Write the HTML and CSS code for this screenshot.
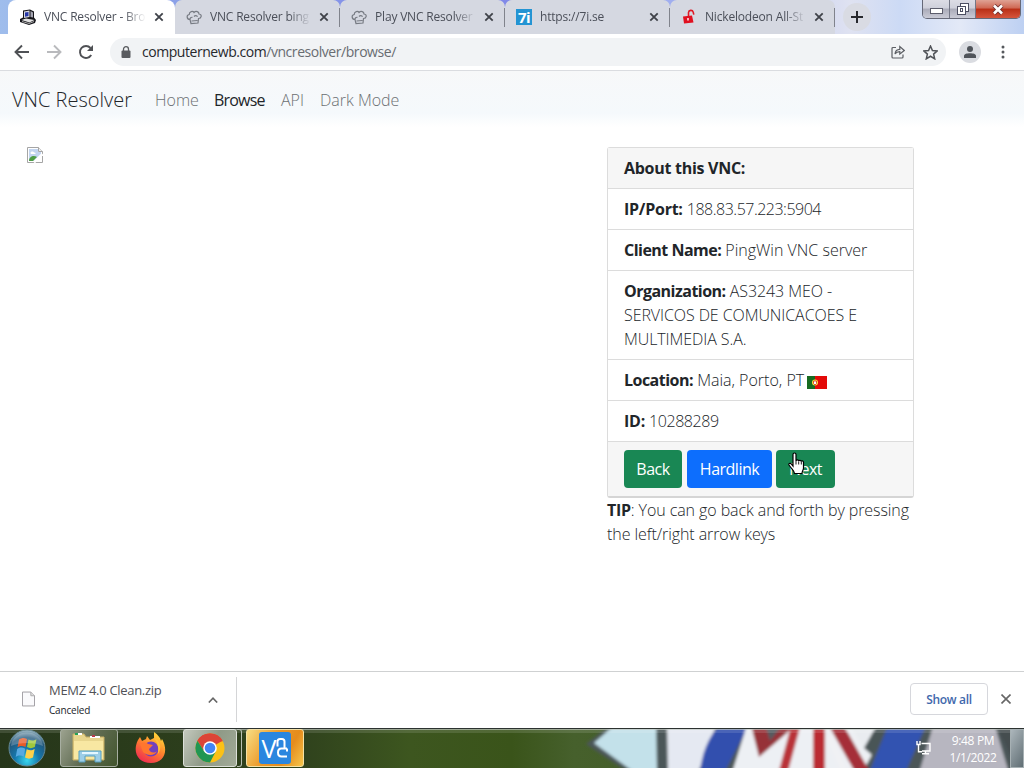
FILE: index.html
```html
<!DOCTYPE html>
<html lang="en">
<head>
  <meta charset="UTF-8">
  <meta name="viewport" content="width=device-width, initial-scale=1.0">
  <title>VNC Resolver - Browse</title>
  <link rel="stylesheet" href="styles.css">
</head>
<body>

  <!-- Tabs -->
  <div class="tabstrip">
    <div class="tab active">
      <svg class="favicon" viewBox="0 0 16 16">
        <path d="M3 1.500l7-1 4 2v6l2 2.500-1 3-6 2-9-3v-3l3-1.500z" fill="#15151a"/>
        <path d="M4 2.500l5.500-1v6.500L4 9z" fill="#d8d8e0"/><path d="M5 3.500l3.500-.5v4L5 7.800z" fill="#2637a8"/>
        <path d="M10.500 2l2.500 1.500v5L10.500 8z" fill="#a5a5b2"/><path d="M1.500 11L6 9.500l8.500 1.500-5 2.500z" fill="#e2e2e2"/>
        <path d="M2 12.500l7 2 5-2" fill="none" stroke="#aaa"/>
      </svg>
      <span class="tab-title">VNC Resolver - Bro</span>
      <svg class="tab-close" viewBox="0 0 10 10"><path d="M1.300 1.300l7.400 7.400M8.700 1.300L1.300 8.700"/></svg>
    </div>
    <div class="tab">
      <svg class="favicon chef" viewBox="0 0 16 16"><path d="M4 10.500C.5 10.500.2 6 3.200 5.500 3.300 2 7 1.800 8 3.500c2-2 5-.8 5 1.500 3.500.5 2.500 4.500-.5 4.500L12 14l-7 .5zM4 10.500c0-1.500 1-2.500 2.500-2.200M8 7.500c1-1.200 3-1 3.500.2M5.500 12l6-.5"/></svg>
      <span class="tab-title">VNC Resolver bing</span>
      <svg class="tab-close" viewBox="0 0 10 10"><path d="M1.300 1.300l7.400 7.400M8.700 1.300L1.300 8.700"/></svg>
    </div>
    <div class="tab">
      <svg class="favicon chef" viewBox="0 0 16 16"><path d="M4 10.500C.5 10.500.2 6 3.200 5.500 3.300 2 7 1.800 8 3.500c2-2 5-.8 5 1.500 3.500.5 2.500 4.500-.5 4.500L12 14l-7 .5zM4 10.500c0-1.500 1-2.500 2.500-2.200M8 7.500c1-1.200 3-1 3.500.2M5.500 12l6-.5"/></svg>
      <span class="tab-title">Play VNC Resolver</span>
      <svg class="tab-close" viewBox="0 0 10 10"><path d="M1.300 1.300l7.400 7.400M8.700 1.300L1.300 8.700"/></svg>
    </div>
    <div class="tab">
      <span class="favicon seven">7i</span>
      <span class="tab-title">https://7i.se</span>
      <svg class="tab-close" viewBox="0 0 10 10"><path d="M1.300 1.300l7.400 7.400M8.700 1.300L1.300 8.700"/></svg>
    </div>
    <div class="tab">
      <svg class="favicon" viewBox="0 0 16 16">
        <path d="M7.500 7V3.500a2.400 2.400 0 014.700-.4l.6 2.500" fill="none" stroke="#e01825" stroke-width="1.600"/>
        <path d="M2 7.500l9-1 1.500 7-9.500 1z" fill="#e01020"/><path d="M7 9v2.500" stroke="#fff" stroke-width="1.400"/>
      </svg>
      <span class="tab-title">Nickelodeon All-St</span>
      <svg class="tab-close" viewBox="0 0 10 10"><path d="M1.300 1.300l7.400 7.400M8.700 1.300L1.300 8.700"/></svg>
    </div>
    <div class="new-tab"><svg width="12" height="12" viewBox="0 0 12 12"><path d="M6 0v12M0 6h12" stroke="#27282d" stroke-width="2"/></svg></div>
    <div class="window-buttons">
      <span class="wbtn min"><svg width="13" height="6" viewBox="0 0 13 6"><rect x=".5" y=".5" width="12" height="5" fill="#fff" stroke="#5c5d6c"/></svg></span>
      <span class="wbtn max"><svg width="12" height="12" viewBox="0 0 12 12"><g fill="#fff" stroke="#4d4f62"><rect x="3.500" y=".5" width="8" height="8"/><rect x=".5" y="3.500" width="8" height="8"/><rect x="3.500" y="5.500" width="2" height="3"/></g></svg></span>
      <span class="wbtn close"><svg width="12" height="11" viewBox="0 0 12 11"><path d="M2 1.500l8 8M10 1.500l-8 8" stroke="#6c3030" stroke-width="4.400"/><path d="M2 1.500l8 8M10 1.500l-8 8" stroke="#fff" stroke-width="2.600"/></svg></span>
    </div>
  </div>

  <!-- Address bar -->
  <div class="toolbar">
    <svg class="nav-icon" viewBox="0 0 16 16"><path d="M15 8H2M8 1.500L1.500 8 8 14.500" stroke="#4f5155"/></svg>
    <svg class="nav-icon" viewBox="0 0 16 16"><path d="M1 8h13M8 1.500L14.500 8 8 14.500" stroke="#b9babd"/></svg>
    <svg class="nav-icon" viewBox="0 0 16 16"><path d="M13.200 11A6 6 0 1112.500 4" stroke="#4f5155"/><path d="M15 1v6H9z" fill="#4f5155"/></svg>
    <div class="omnibox">
      <svg class="lock" viewBox="0 0 10 12"><rect x=".5" y="4.500" width="9" height="7.500" rx="1" fill="#5a5c60"/><path d="M2.500 5V3.200a2.500 2.500 0 015 0V5" fill="none" stroke="#5a5c60" stroke-width="1.300"/></svg>
      <span class="url"><span class="host">computernewb.com</span>/vncresolver/browse/</span>
      <svg class="share" viewBox="0 0 14 14"><path d="M5 2.500H2a1 1 0 00-1 1V12a1 1 0 001 1h9a1 1 0 001-1V9.500M4 9c.3-3 2-4.500 4.800-4.600V1.500L13.300 5.500 8.800 9V6.700C6.500 6.700 5 7.500 4 9z"/></svg>
      <svg class="star" viewBox="0 0 14 14"><path d="M7 1l1.800 4.100 4.400.4-3.300 3 1 4.400L7 10.500l-3.900 2.400 1-4.400-3.300-3 4.400-.4z"/></svg>
    </div>
    <div class="avatar"><svg width="12" height="12" viewBox="0 0 12 12"><circle cx="6" cy="3" r="3"/><path d="M0 12V9.800C0 6.500 12 6.500 12 9.800V12z"/></svg></div>
    <svg class="menu" viewBox="0 0 4 14"><circle cx="2" cy="2" r="1.500"/><circle cx="2" cy="7" r="1.500"/><circle cx="2" cy="12" r="1.500"/></svg>
  </div>

  <!-- Site -->
  <nav class="navbar">
    <a class="brand">VNC Resolver</a>
    <a class="nav-link home">Home</a>
    <a class="nav-link browse">Browse</a>
    <a class="nav-link api">API</a>
    <a class="nav-link">Dark Mode</a>
  </nav>

  <main class="content">
    <div class="screen">
      <svg width="16" height="16" viewBox="0 0 16 16">
        <path d="M.5.5h11l4 4v11H.5z" fill="#fff" stroke="#a5a5a5"/>
        <path d="M2 2h9v3h3v4l-5 5H2z" fill="#c3d5f0"/><path d="M3.500 6c0-2 3-2 3.500-.5 2-.3 2 1.500 1 1.500H4z" fill="#fff"/>
        <path d="M2 14c0-5 5-6 8-4l-4 4z" fill="#4f9e46"/><path d="M15.500 7L7 15.500" stroke="#fff" stroke-width="2.500"/>
        <path d="M11.500.5v4h4" fill="#eee" stroke="#a5a5a5"/>
      </svg>
    </div>
    <div class="info">
      <div class="card">
        <div class="card-header"><b>About this VNC:</b></div>
        <div class="row"><b class="ip">IP/Port:</b> <span class="v-ip">188.83.57.223:5904</span></div>
        <div class="row"><b>Client Name:</b> <span class="v-client">PingWin VNC server</span></div>
        <div class="row"><b>Organization:</b> <span class="v-org">AS3243 MEO -<br>SERVICOS DE COMUNICACOES E<br>MULTIMEDIA S.A.</span></div>
        <div class="row"><b>Location:</b> <span class="v-loc">Maia, Porto, PT</span>
          <svg class="flag" viewBox="0 0 20 13"><path fill="#e30a08" d="M0 0h20v13H0z"/><path fill="#176b20" d="M0 0h8v13H0z"/><circle cx="8" cy="6.500" r="3" fill="#ffe33c"/><path d="M6.500 5h3v2.500L8 9 6.500 7.500z" fill="#fff" stroke="#d32b1c" stroke-width=".8"/></svg>
        </div>
        <div class="row"><b class="id">ID:</b> <span class="v-id">10288289</span></div>
        <div class="card-footer">
          <button class="btn green back">Back</button>
          <button class="btn blue">Hardlink</button>
          <button class="btn green next">Next
            <svg class="pointer" viewBox="0 0 17 23"><path d="M5 14V2.500c0-2 3-2 3 0V9c0-1.500 2.700-1.500 2.700.3 0-1.300 2.600-1.200 2.600.4 0-1.200 2.200-1 2.200.6V16c0 2-1.500 3-1.500 5.500H6.500c0-2.500-2-3.500-5.500-8.500-.8-1.300 1-2.300 2.200-1.200z" fill="#fff" stroke="#000" stroke-width="1.200"/><path d="M8 9v3.500M10.700 9.500v3M13.300 10v2.500" stroke="#000" stroke-width=".9"/></svg>
          </button>
        </div>
      </div>
      <p class="tip"><b>TIP</b>: You can go back and forth by pressing<br>the left/right arrow keys</p>
    </div>
  </main>

  <!-- Downloads -->
  <div class="downloads">
    <div class="download-item">
      <svg class="file" viewBox="0 0 14 16"><path d="M.5.5h9l4 4v11H.5z" fill="#fafafc" stroke="#9a989e"/><path d="M9.500.5v4h4" fill="#ddd" stroke="#aaa"/></svg>
      <div class="file-text"><div class="file-name">MEMZ 4.0 Clean.zip</div><div class="file-state">Canceled</div></div>
      <svg class="caret" viewBox="0 0 10 6"><path d="M.8 5.500L5 1.200l4.200 4.300"/></svg>
    </div>
    <button class="show-all">Show all</button>
    <svg class="bar-close" viewBox="0 0 10 10"><path d="M.5.5l9 9M9.500.5l-9 9"/></svg>
  </div>

  <!-- Windows taskbar -->
  <div class="taskbar">
    <svg class="wallpaper" viewBox="0 0 1024 40" preserveAspectRatio="none">
      <defs>
        <linearGradient id="grass"><stop offset="0" stop-color="#26361a"/><stop offset=".3" stop-color="#30431d"/><stop offset=".4" stop-color="#3d561f"/><stop offset=".5" stop-color="#3a541a"/><stop offset=".56" stop-color="#46602c"/><stop offset="1" stop-color="#3c531b"/></linearGradient>
        <filter id="soft" x="-5%" y="-20%" width="110%" height="140%"><feGaussianBlur stdDeviation="1.500"/></filter>
      </defs>
      <path fill="url(#grass)" d="M0 0h1024v40H0z"/>
      <g filter="url(#soft)">
        <path d="M586 16L613-5h420v50H629z" fill="#4b5659"/>
        <path d="M594 15L617-5h39l1 50h-22z" fill="#c3e1ea"/>
        <path d="M667-5h50l-19 50h-30z" fill="#e5e9f2"/>
        <path d="M721-5h29l-26 50h-24c2-25 12-40 21-50z" fill="#304fae"/>
        <path d="M747-3l-15 48h130l14-26-28-22z" fill="#edf0f4"/>
        <path d="M751-3h45l-37 32z" fill="#963038"/><path d="M765-4l5 17 13-17z" fill="#555b60"/>
        <path d="M796-3L783 45" stroke="#b93139" stroke-width="9"/><path d="M819-3v48" stroke="#bb2932" stroke-width="12"/><path d="M836-3l27 48" stroke="#a52d37" stroke-width="13"/><path d="M829 8l16 37" stroke="#f0f1f4" stroke-width="7"/>
        <path d="M848-5h44l-25 30z" fill="#e9ecf0"/><path d="M892-5h-14l-14 25 8 7z" fill="#4a5557"/>
        <path d="M889-5h38l-22 50h-36z" fill="#3153b1"/>
        <path d="M934-5l-15 50h90l-15-50z" fill="#b7b6c0"/>
        <path d="M995-5l15 32 15 18V-5z" fill="#454d50"/>
      </g>
      <path d="M0 .5h1024" stroke="#2c3230"/><path d="M0 1.500h1024" stroke="#c6ccc6" stroke-opacity=".7"/><path fill="#fff" fill-opacity=".12" d="M0 2h1024v3H0z"/>
    </svg>

    <svg class="start" viewBox="0 0 38 38">
      <defs><radialGradient id="orb" cx=".5" cy=".85" r=".85"><stop offset="0" stop-color="#38d6ee"/><stop offset=".4" stop-color="#1577ac"/><stop offset=".75" stop-color="#22577b"/><stop offset="1" stop-color="#a6bfc9"/></radialGradient></defs>
      <circle cx="19" cy="19" r="18" fill="url(#orb)" stroke="#668994"/>
      <path d="M11 10.500c3-2 5-2 8-.5l-1.500 8c-3-1.500-5-1.500-8 .3z" fill="#e75b29"/><path d="M20.500 10.500c3 1.500 5 1.500 8-.3L26.800 18c-3 1.500-5 1.500-7.800 0z" fill="#9fc83c"/>
      <path d="M9.200 20c3-1.800 5-1.800 8-.3l-1.500 8c-3-1.500-5-1.500-8 .3z" fill="#58a9e1"/><path d="M18.700 20.200c3 1.500 5 1.500 8-.2L25 28.500c-3 1.500-5 1.500-8 0z" fill="#fdd04b"/>
      <path d="M3 17C5-1 33-1 35 17c-9-4-23-4-32 0z" fill="#fff" fill-opacity=".22"/>
    </svg>
    <div class="task explorer"><svg width="34" height="32" viewBox="0 0 34 32"><path d="M1 2h11l2 3h18v23H1z" fill="#e8d58d" stroke="#c6ae64"/><path d="M3 2h7M18 5h10" stroke="#fff" stroke-width="2"/><path d="M3 2h3" stroke="#27a357" stroke-width="2"/><path d="M20 4h3" stroke="#b83a4b" stroke-width="2"/><path d="M2 9h29v18H2z" fill="#f8e7a2"/><path d="M7 30V19h22v11h-6v-6H13v6z" fill="#9dcee7" stroke="#569fbe"/><path d="M10 21h16" stroke="#e4f7ff" stroke-width="2"/></svg></div>
    <div class="task firefox"><svg width="32" height="32" viewBox="0 0 32 32"><defs><linearGradient id="fox" x1=".8" y1="0" x2=".2" y2="1"><stop offset="0" stop-color="#ffe43b"/><stop offset=".45" stop-color="#ff862d"/><stop offset="1" stop-color="#ee2554"/></linearGradient></defs><path d="M3 8l2-3 2 4 4-2 1-3 3 4 4-2V0c4 3 6 5 7 9l1-2c7 12 2 24-11 24C3 31-3 20 3 8z" fill="url(#fox)"/><circle cx="16" cy="17" r="7.500" fill="#7141bd"/><path d="M5 12c4-3 7-1 8 0l5 1-4 4c0 3 5 5 8 2-2 5-10 5-14 1z" fill="#ff762e"/><path d="M19 6c7 3 8 10 4 16 1-8-1-12-4-16z" fill="#ffc13a"/></svg></div>
    <div class="task chrome"><svg width="30" height="30" viewBox="0 0 30 30"><circle cx="15" cy="15" r="14.500" fill="#fbc116"/><path d="M15 15L2.440 7.750A14.500 14.500 0 0127.560 7.750z" fill="#dc4437"/><path d="M15 8.250h12.800A14.500 14.500 0 002.440 7.750L9.200 18.400z" fill="#dc4437"/><path d="M2.440 7.750A14.500 14.500 0 0015 29.500l5.850-11.130L15 15 9.150 18.370z" fill="#219653"/><circle cx="15" cy="15" r="6.800" fill="#fff"/><circle cx="15" cy="15" r="5.300" fill="#4385f4"/></svg></div>
    <div class="chrome-stack"></div>
    <div class="task vnc">
      <span class="vnc-logo">V<svg width="12" height="22" viewBox="0 0 12 22"><path d="M1.500 9.500V4.500Q1.500 2 4 2h2Q8.500 2 8.500 4.500V11M11 11.500H5.500Q2 11.500 2 15.500T5.500 19.500H11M11 11.500v3" fill="none" stroke="#fff" stroke-width="2"/></svg></span>
    </div>

    <svg class="network" viewBox="0 0 15 14"><path d="M5.500 2.500h8.500v7.500H6M9.500 10v2.500M6 12.800h7M1 0v3.500h3V0M2.500 3.500v7.200H6" fill="none" stroke="#fff" stroke-width="1.400"/></svg>
    <div class="clock"><div>9:48 PM</div><div class="date">1/1/2022</div></div>
    <div class="show-desktop"></div>
  </div>

</body>
</html>
```
FILE: styles.css
```css
* {
  box-sizing: border-box;
}
body {
  margin: 0;
  width: 1024px;
  height: 768px;
  overflow: hidden;
  display: flex;
  flex-direction: column;
  background: #fff;
  color: #212529;
  font-family: 'Segoe UI', 'Open Sans', 'Noto Sans', sans-serif;
  font-size: 16px;
  line-height: 24px;
}
svg {
  flex: none;
  display: block;
}

/* tabs */
.tabstrip {
  height: 34px;
  flex: none;
  display: flex;
  padding-left: 8px;
  background: linear-gradient(90deg, #9fbdec 0, #8ba1e8 170px, #8088e8 500px, #a6b5f0 700px, #dfe2f1 850px, #ccdaf5 900px, #e3e9f7 960px, #bdd0f2 1024px);
}
.tab {
  width: 165px;
  height: 34px;
  display: flex;
  align-items: center;
  padding: 0 11px;
  background: #d5d8e1;
  position: relative;
  font-size: 12px;
  color: #4b4f59;
}
.tab + .tab {
  border-radius: 7px 7px 0 0;
}
.tab.active {
  width: 167px;
  padding-left: 12px;
  background: #fff;
  border-radius: 8px 8px 0 0;
}
.tab:not(.active)::after {
  content: "";
  position: absolute;
  right: 0;
  top: 8px;
  width: 1px;
  height: 19px;
  background: #80838c;
}
.favicon {
  width: 16px;
  height: 16px;
  flex: none;
}
.chef {
  fill: none;
  stroke: #777b83;
  stroke-width: 1.2;
}
.seven {
  background: #2394d3;
  color: #fff;
  font-size: 15px;
  font-weight: 700;
  line-height: 16px;
  text-align: center;
  letter-spacing: -0.5px;
}
.tab-title {
  width: 102px;
  margin: 0 8px;
  overflow: hidden;
  white-space: nowrap;
  letter-spacing: -0.18px;
  -webkit-mask-image: linear-gradient(90deg, #000 78%, transparent 100%);
  mask-image: linear-gradient(90deg, #000 78%, transparent 100%);
}
.tab-close {
  width: 10px;
  height: 10px;
  margin-left: auto;
  stroke: #3f4249;
  stroke-width: 1.8;
}
.new-tab {
  width: 28px;
  height: 28px;
  margin: 3px 0 0 8px;
  border-radius: 50%;
  display: flex;
  align-items: center;
  justify-content: center;
  background: #d9dbe3;
}
.window-buttons {
  margin-left: auto;
  margin-right: 3px;
  height: 19px;
  display: flex;
  border: 1px solid #666978;
  border-top: 0;
  border-radius: 0 0 5px 5px;
  overflow: hidden;
}
.wbtn {
  width: 27px;
  display: flex;
  align-items: center;
  justify-content: center;
  background: linear-gradient(#dcdce5 0, #cfd0db 45%, #aaabb9 50%, #cacbd6 100%);
  border-right: 1px solid #747786;
}
.wbtn.min {
  padding-top: 3px;
}
.wbtn.max {
  width: 26px;
}
.wbtn.close {
  width: 44px;
  border: 0;
  background: linear-gradient(#dfa294 0, #cf6853 45%, #b92f16 50%, #d6553c 100%);
}

/* address bar */
.toolbar {
  height: 37px;
  flex: none;
  display: flex;
  align-items: center;
  padding: 0 19px 0 14px;
  border-bottom: 1px solid #dadce0;
  background: #fff;
}
.nav-icon {
  width: 16px;
  height: 16px;
  margin-right: 16px;
  fill: none;
  stroke-width: 1.9;
}
.omnibox {
  width: 836px;
  height: 28px;
  border-radius: 14px;
  background: #f1f3f5;
  display: flex;
  align-items: center;
  padding: 0 8px 0 11px;
}
.lock {
  width: 10px;
  height: 12px;
  margin-right: 11px;
}
.url {
  font-size: 14px;
  color: #686c71;
  letter-spacing: -0.45px;
}
.host {
  color: #26282c;
}
.share {
  width: 14px;
  height: 14px;
  margin-left: auto;
  margin-right: 18px;
  fill: none;
  stroke: #5c5f64;
  stroke-width: 1.2;
}
.star {
  width: 15px;
  height: 15px;
  fill: none;
  stroke: #505358;
  stroke-width: 1.4;
}
.avatar {
  width: 22px;
  height: 22px;
  margin-left: 13px;
  border-radius: 50%;
  background: #dadce1;
  fill: #50545a;
  display: flex;
  align-items: center;
  justify-content: center;
}
.menu {
  width: 4px;
  height: 14px;
  margin-left: auto;
  fill: #56595d;
}

/* site navbar */
.navbar {
  height: 56px;
  flex: none;
  display: flex;
  align-items: center;
  padding: 2px 12px 0;
  background: linear-gradient(#f7f8f9, #f5f9fc 75%, #fff);
}
.brand {
  width: 143px;
  font-size: 20px;
  font-weight: 300;
  white-space: nowrap;
}
.nav-link {
  color: #6c7073;
  font-weight: 300;
  white-space: nowrap;
}
.home {
  width: 59px;
}
.browse {
  width: 67px;
  color: #212529;
  font-weight: 400;
  letter-spacing: -0.8px;
}
.api {
  width: 39px;
}

/* page */
.content {
  flex: 1;
  display: flex;
  padding: 20px 27px 0;
}
.screen {
  width: 580px;
}
.info {
  width: 307px;
}
.card {
  border: 1px solid #dcdcdc;
  border-bottom: 2px solid #d5d5d5;
  border-radius: 3px;
}
.card-header, .row {
  padding: 8px 16px;
  border-bottom: 1px solid #dcdcdc;
  white-space: nowrap;
}
.card-header, .card-footer {
  background: #f6f6f6;
}
.row {
  font-weight: 300;
}
b {
  font-weight: 700;
  letter-spacing: -0.28px;
}
.row b {
  letter-spacing: -0.52px;
}
.row .ip, .row .id {
  letter-spacing: -0.25px;
}
.v-ip {
  letter-spacing: -0.5px;
}
.v-org {
  letter-spacing: -0.08px;
}
.v-id {
  letter-spacing: -0.45px;
}
.flag {
  display: inline-block;
  width: 20px;
  height: 13px;
  margin-left: -1px;
  vertical-align: -3px;
}
.card-footer {
  padding: 8px 16px;
  display: flex;
}
.btn {
  height: 38px;
  border: 0;
  border-radius: 4px;
  padding: 0;
  color: #fff;
  font: inherit;
  letter-spacing: -0.5px;
}
.green {
  background: #198754;
}
.blue {
  width: 85px;
  margin: 0 4px 0 5px;
  background: #0d6efd;
}
.back {
  width: 58px;
}
.next {
  width: 59px;
  position: relative;
}
.pointer {
  position: absolute;
  left: 12px;
  top: 2px;
  width: 17px;
  height: 23px;
}
.tip {
  margin: 0;
  font-weight: 300;
  letter-spacing: -0.08px;
  white-space: nowrap;
}

/* download shelf */
.downloads {
  height: 57px;
  flex: none;
  display: flex;
  align-items: center;
  border-top: 1px solid #cfd1d2;
  background: #fff;
  padding-right: 13px;
  padding-bottom: 2px;
}
.download-item {
  width: 237px;
  height: 45px;
  display: flex;
  align-items: center;
  padding-left: 22px;
  border-right: 1px solid #d4d5d7;
}
.file {
  width: 13px;
  height: 16px;
}
.file-text {
  width: 159px;
  margin-left: 14px;
  padding-bottom: 1px;
}
.file-name {
  font-size: 13px;
  line-height: 22px;
  letter-spacing: -0.3px;
  color: #505156;
}
.file-state {
  font-size: 10px;
  line-height: 18px;
  letter-spacing: -0.2px;
}
.caret {
  width: 10px;
  height: 6px;
  margin-top: 2px;
  fill: none;
  stroke: #666;
  stroke-width: 1.6;
}
.show-all {
  width: 78px;
  height: 32px;
  margin-left: auto;
  margin-right: 13px;
  padding: 0;
  background: #fff;
  border: 1px solid #d6d7dc;
  border-radius: 4px;
  font: 600 12px 'Segoe UI', 'Open Sans', sans-serif;
  letter-spacing: -0.3px;
  color: #4168ac;
}
.bar-close {
  width: 10px;
  height: 10px;
  stroke: #666;
  stroke-width: 1.6;
}

/* windows taskbar */
.taskbar {
  height: 40px;
  flex: none;
  display: flex;
  align-items: center;
  position: relative;
  isolation: isolate;
  padding-left: 8px;
}
.wallpaper {
  position: absolute;
  inset: 0;
  width: 1024px;
  height: 40px;
  z-index: -1;
}
.start {
  width: 38px;
  height: 38px;
}
.task {
  width: 58px;
  height: 38px;
  display: flex;
  align-items: center;
  justify-content: center;
  border: 1px solid transparent;
  border-radius: 3px;
}
.explorer {
  margin-left: 14px;
  border-color: #a7aea1;
  background: linear-gradient(120deg, #9ca28f, #5f6b51 50%, #43562e);
}
.firefox {
  margin-left: 4px;
}
.chrome {
  width: 54px;
  margin-left: 3px;
  border-color: #dce0d9;
  background: linear-gradient(120deg, #c4c9be, #8f9a87 50%, #a2ab98);
}
.chrome-stack {
  width: 5px;
  height: 38px;
  border: 1px solid #b9c0b3;
  border-left: 0;
  border-radius: 0 3px 3px 0;
}
.vnc {
  margin-left: 4px;
  border-color: #f4e1a6;
  background: linear-gradient(120deg, #f8dd83, #eb9726 45%, #e58c1d 70%, #f5c64c);
}
.vnc-logo {
  width: 32px;
  height: 32px;
  display: flex;
  align-items: center;
  justify-content: center;
  border-radius: 3px;
  background: #2a86df;
  color: #fff;
  font-size: 25px;
  line-height: 32px;
}
.network {
  width: 15px;
  height: 14px;
  margin-left: auto;
  margin-right: 18px;
}
.clock {
  width: 48px;
  margin-right: 13px;
  color: #fff;
  font-size: 12px;
  line-height: 17px;
  letter-spacing: -0.35px;
  text-align: center;
  white-space: nowrap;
  padding-top: 2px;
}
.show-desktop {
  width: 14px;
  height: 39px;
  margin-top: 1px;
  border: 1px solid #a6b0b3;
  background: linear-gradient(120deg, #acb6bb, #606e74);
}
```
